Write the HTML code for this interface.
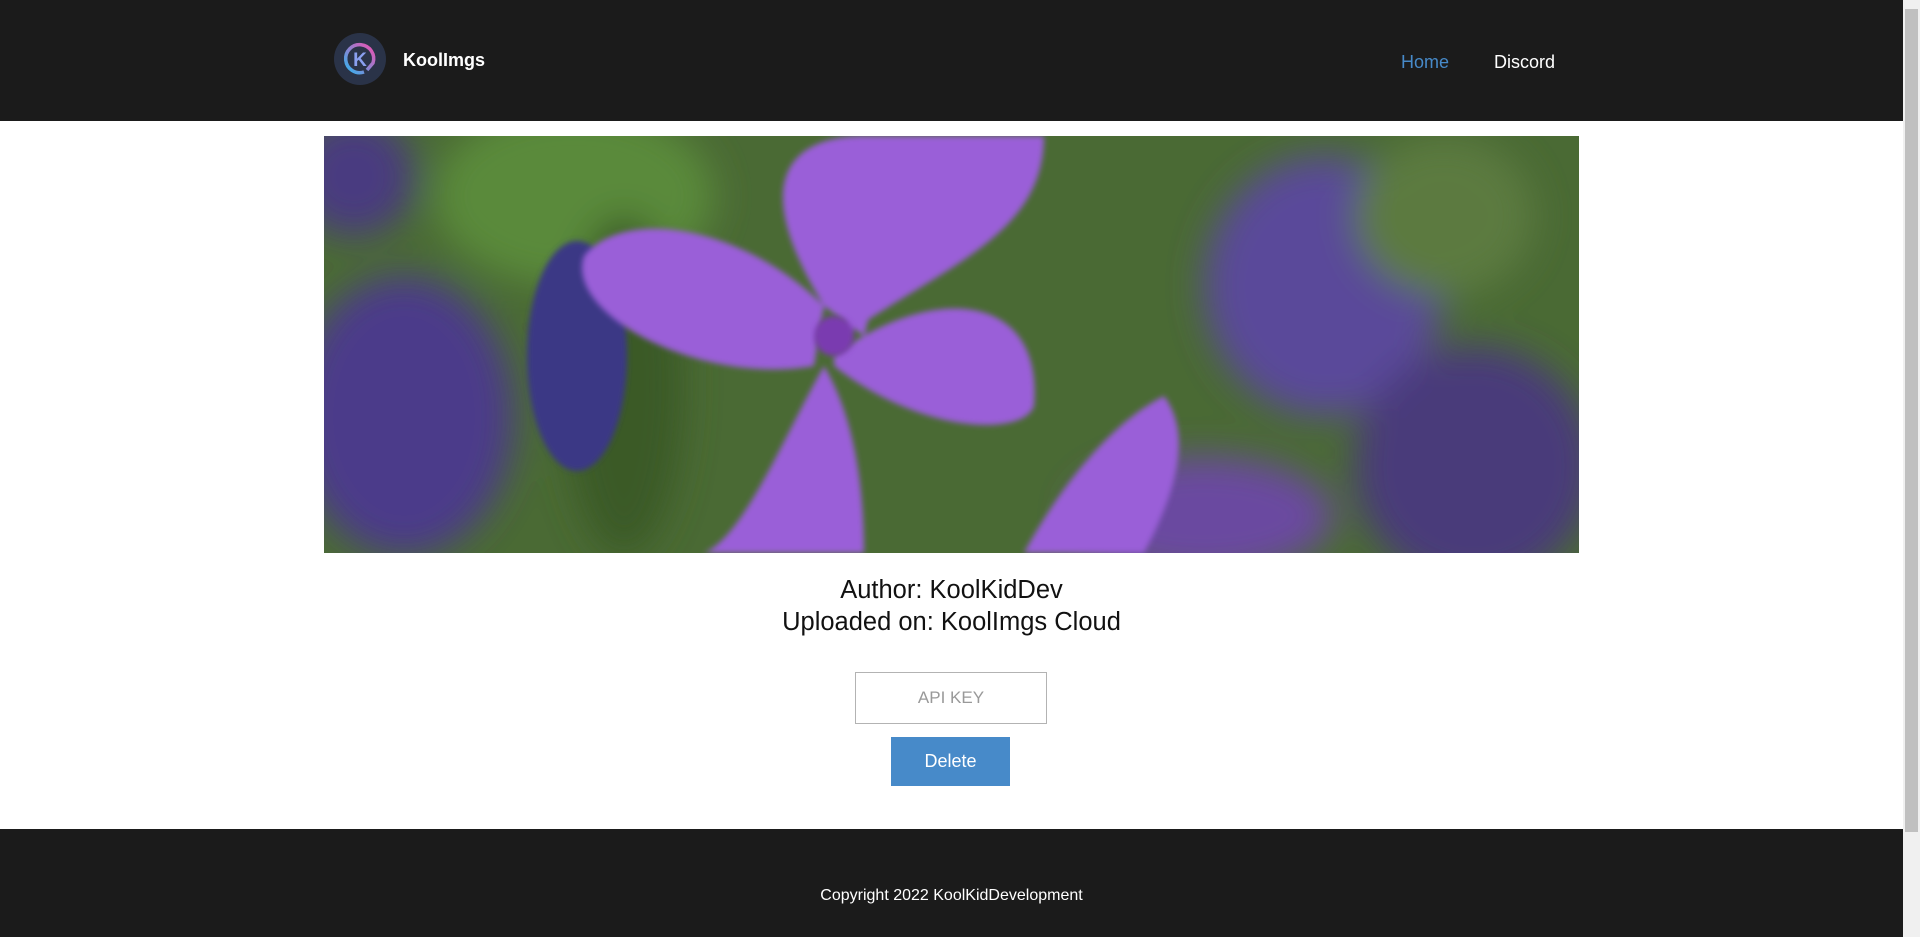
<!DOCTYPE html>
<html><head><meta charset="utf-8"><style>
*{margin:0;padding:0;box-sizing:border-box}
body{width:1920px;height:937px;overflow:hidden;background:#fff;font-family:"Liberation Sans",sans-serif;position:relative}
.main{position:absolute;left:0;top:0;width:1903px;height:937px}
header{position:absolute;left:0;top:0;width:1903px;height:121px;background:#1b1b1b}
.logo{position:absolute;left:334px;top:33px;width:52px;height:52px;border-radius:50%;background:#2a3348}
.brand{position:absolute;left:403px;top:50px;color:#fff;font-weight:bold;font-size:18px}
.nav{position:absolute;top:52px;font-size:18px}
.img{position:absolute;left:324px;top:136px;width:1255px;height:417px;overflow:hidden;background:#3d5a2a}
.txt{position:absolute;left:0;width:1903px;text-align:center;font-size:25.5px;color:#111}
.input{position:absolute;left:855px;top:672px;width:192px;height:52px;border:1px solid #b3b3b3;text-align:center;line-height:50px;color:#999;font-size:17px}
.btn{position:absolute;left:891px;top:737px;width:119px;height:49px;background:#478ac9;color:#fff;text-align:center;line-height:49px;font-size:18px}
footer{position:absolute;left:0;top:829px;width:1903px;height:108px;background:#1b1b1b;color:#fff;text-align:center;font-size:16px;line-height:16px;padding-top:59px}
.sb{position:absolute;left:1903px;top:0;width:17px;height:937px;background:#f0f0f0}
.th{position:absolute;left:2px;top:9px;width:13px;height:823px;background:#c0c0c0}
</style></head><body>
<div class="main">
<header>
<div class="logo"><svg width="52" height="52" viewBox="0 0 52 52"><defs><linearGradient id="g" x1="0" y1="1" x2="1" y2="0"><stop offset="0" stop-color="#2fb4f0"/><stop offset="1" stop-color="#f04fb0"/></linearGradient></defs><path d="M30 39 A14 14 0 1 1 39 30 L33 37" fill="none" stroke="url(#g)" stroke-width="3.5"/><text x="26" y="33" text-anchor="middle" font-family="Liberation Sans" font-weight="bold" font-size="19" fill="#8aa0f0">K</text></svg></div>
<div class="brand">KoolImgs</div>
<div class="nav" style="left:1401px;color:#478ac9">Home</div>
<div class="nav" style="left:1494px;color:#fff">Discord</div>
</header>
<div class="img"><svg width="1255" height="417" viewBox="0 0 1255 417">
<defs><filter id="b"><feGaussianBlur stdDeviation="18"/></filter><filter id="b2"><feGaussianBlur stdDeviation="3"/></filter></defs>
<rect width="1255" height="417" fill="#4a6a34"/>
<g filter="url(#b)">
<ellipse cx="80" cy="280" rx="110" ry="140" fill="#4b3a8a"/>
<ellipse cx="250" cy="60" rx="140" ry="90" fill="#5a8a3a"/>
<ellipse cx="300" cy="250" rx="60" ry="170" fill="#3a5a26"/>
<ellipse cx="1000" cy="150" rx="120" ry="130" fill="#5a4a9a"/>
<ellipse cx="1150" cy="330" rx="120" ry="120" fill="#4a3a7a"/>
<ellipse cx="1120" cy="80" rx="90" ry="80" fill="#5b7a40"/>
<ellipse cx="880" cy="380" rx="130" ry="60" fill="#6a4aa0"/>
<ellipse cx="30" cy="40" rx="60" ry="60" fill="#4a3a80"/>
</g>
<ellipse cx="253" cy="220" rx="50" ry="115" fill="#3b3885" filter="url(#b2)"/>
<g fill="#9a5fd8" filter="url(#b2)">
<path d="M500 170 C420 40 470 0 540 0 L580 0 C600 60 560 120 540 200Z"/>
<path d="M490 230 C380 250 240 180 260 120 C300 70 420 90 500 170Z"/>
<path d="M520 200 C620 130 720 100 720 0 L560 0 C560 60 520 130 520 200Z"/>
<path d="M510 220 C600 150 720 150 710 270 C700 300 600 300 510 230Z"/>
<path d="M500 230 C460 300 420 400 380 417 L540 417 C540 350 530 280 500 230Z"/>
<path d="M840 260 C760 300 700 417 700 417 L820 417 C850 360 870 300 840 260Z"/>
</g>
<circle cx="510" cy="200" r="20" fill="#7a3ab0" filter="url(#b2)"/>
</svg></div>
<div class="txt" style="top:576px">Author: KoolKidDev</div>
<div class="txt" style="top:608px">Uploaded on: KoolImgs Cloud</div>
<div class="input">API KEY</div>
<div class="btn">Delete</div>
<footer>Copyright 2022 KoolKidDevelopment</footer>
</div>
<div class="sb"><div class="th"></div></div>
</body></html>
